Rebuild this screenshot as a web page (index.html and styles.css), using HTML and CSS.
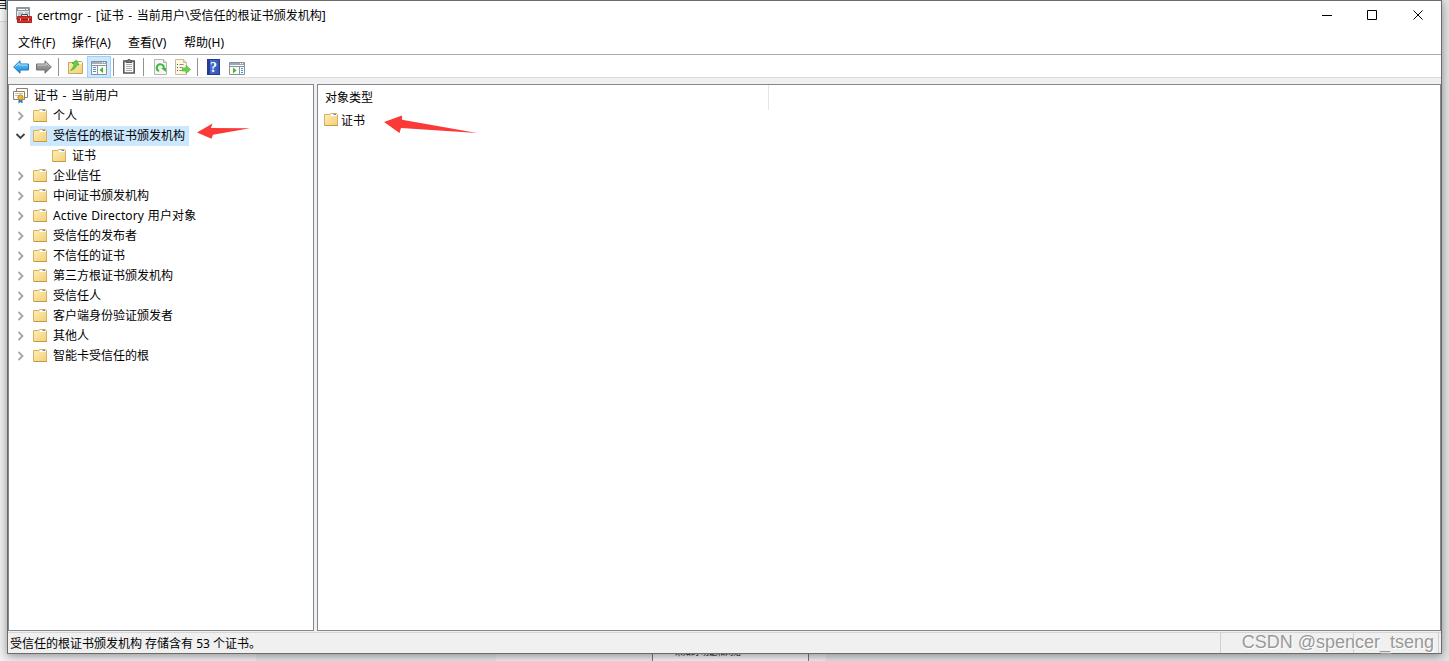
FILE: index.html
```html
<!DOCTYPE html>
<html lang="zh-CN">
<head>
<meta charset="UTF-8">
<title>certmgr</title>
<link rel="stylesheet" href="styles.css">
</head>
<body>
<svg class="defs" width="0" height="0">
<defs>
<linearGradient id="gold" x1="0" y1="0" x2="1" y2="1"><stop offset="0" stop-color="#ffefb4"/><stop offset="1" stop-color="#f2cf78"/></linearGradient>
<linearGradient id="blue" x1="0" y1="0" x2="0" y2="1"><stop offset="0" stop-color="#7fd4fb"/><stop offset="1" stop-color="#0b83dc"/></linearGradient>
<linearGradient id="gray" x1="0" y1="0" x2="0" y2="1"><stop offset="0" stop-color="#b4b4b4"/><stop offset="1" stop-color="#767676"/></linearGradient>
</defs>
<symbol id="folder" viewBox="0 0 14 13">
<path d="M.5 1.500h5l1-1h6l1 1v11H.5z" fill="url(#gold)" stroke="#d3b065"/>
<path d="M7 1h5.500v2H7z" fill="#fff"/><path d="M9.500 1h2.500v1H9.500z" fill="#3f91d8"/>
<path d="M1 12.500h13" stroke="#c39a45"/>
</symbol>
<symbol id="right" viewBox="0 0 8 10"><path d="M1.500 1l4 4-4 4" fill="none" stroke="#a6a6a6" stroke-width="1.800"/></symbol>
<symbol id="down" viewBox="0 0 10 8"><path d="M1.500 2l4 4 4-4" fill="none" stroke="#404040" stroke-width="1.800"/></symbol>
</svg>

<!-- windows lying behind -->
<div class="behind">
<div class="behind-top">自</div>
<div class="behind-box">未知的 功能和网络</div>
</div>

<div class="window">
<div class="titlebar">
<svg class="app-icon" width="16" height="17" viewBox="0 0 16 17">
<path d="M.5 .5h13v12H.5z" fill="#e3e8eb" stroke="#8a949b"/><path d="M1 1h12v3H1z" fill="#8d999f"/>
<path d="M2 2.500h7M10 2.500h2" stroke="#fff"/><path d="M2 6h5M2 8h3M9 6h4" stroke="#9ca6ac"/>
<path d="M5.500 9.500v-2h6v2" fill="none" stroke="#4a4a4a"/>
<path d="M1.500 9.500h14v6h-14z" fill="#d3302a" stroke="#b3211d"/>
<path d="M2 12.500h13" stroke="#981b18"/><path d="M4 11.500h1v2H4zM12 11.500h1v2h-1z" fill="#f3e4e2"/>
</svg>
<span class="title">certmgr - [证书 - 当前用户\受信任的根证书颁发机构]</span>
<svg class="controls" width="112" height="14" viewBox="0 0 112 14">
<path d="M2 7.500h10M47.500 2.500h9v9h-9zM93.500 2.500l9 9M102.500 2.500l-9 9" fill="none" stroke="#000"/>
</svg>
</div>
<div class="menu"><span>文件(F)</span><span>操作(A)</span><span>查看(V)</span><span>帮助(H)</span></div>
<div class="toolbar">
<svg class="back" width="16" height="14" viewBox="0 0 16 14"><path d="M.7 7L7 .8V4h8.500v6H7v3.200z" fill="url(#blue)" stroke="#2776b5"/><path d="M2.500 6.500L6 3v2h8.500" fill="none" stroke="#a7e3ff"/></svg>
<svg class="forward" width="16" height="14" viewBox="0 0 16 14"><path d="M15.300 7L9 .8V4H.5v6H9v3.200z" fill="url(#gray)" stroke="#737373"/><path d="M1.500 5H10V3l3.500 3.500" fill="none" stroke="#c9c9c9"/></svg>
<i class="sep"></i>
<svg class="up" width="15" height="15" viewBox="0 0 15 15"><path d="M.5 3.500h5l1-1h7l1 1v11H.5z" fill="url(#gold)" stroke="#c8a65c"/><path d="M9 3h5v2H9z" fill="#f8f2de"/><path d="M2.500 11.500c3-.5 5.500-2.500 6.500-5.500h2L8.500 1 4 4.500h2C6 7 5 9 2.500 11.500z" fill="#5cd343" stroke="#36a52b" stroke-width=".6"/></svg>
<span class="tool-on"><svg width="16" height="14" viewBox="0 0 16 14"><path d="M.5 .5h15v13H.5z" fill="#fbfbfb" stroke="#87919a"/><path d="M1 1h14v2H1z" fill="#a4afb9"/><path d="M11 1.500h1M13 1.500h1" stroke="#fff"/><path d="M1 4.500h14M6.500 5v9" stroke="#8795a1"/><path d="M2 6.500h3M2 8.500h3M2 10.500h3" stroke="#4c91d0"/><path d="M12 6v6L8.500 9z" fill="#3dbb2f"/></svg></span>
<i class="sep sep-on"></i>
<svg class="clip" width="12" height="15" viewBox="0 0 12 15"><path d="M.8 2h10.400v12H.8z" fill="#fafafa" stroke="#575757" stroke-width="1.600"/><path d="M3 1.500h2V.5h2v1h2v2H3z" fill="#777" stroke="#555"/><path d="M3 5.500h6M3 7.500h6M3 9.500h6M3 11.500h6" stroke="#aaa"/></svg>
<i class="sep sep-clip"></i>
<svg class="refresh" width="13" height="16" viewBox="0 0 13 16"><path d="M.5 .5h9l3 3v12H.5z" fill="#f7f7f7" stroke="#b4b4b4"/><path d="M9.500 .5v3h3" fill="#ddd" stroke="#b4b4b4"/><path d="M5 12A3.500 3.500 0 1 1 9.700 9.500" fill="none" stroke="#3dbb3a" stroke-width="2"/><path d="M7 9h5v4z" fill="#3dbb3a"/></svg>
<svg class="export" width="16" height="16" viewBox="0 0 16 16"><path d="M.5 .5h8l3 3v12H.5z" fill="#fff8df" stroke="#c4bda6"/><path d="M8.500 .5v3h3" fill="#e9dfbe" stroke="#c4bda6"/><path d="M4.500 5.500h4M4.500 8.500h3M4.500 11.500h4" stroke="#8b8b8b"/><path d="M2 5.500h1M2 8.500h1M2 11.500h1" stroke="#555"/><path d="M7.500 9H11V6.500l4.500 4-4.500 4V12H7.500z" fill="#6ad34e" stroke="#4ab53c" stroke-width=".7"/></svg>
<i class="sep sep-export"></i>
<span class="help">?</span>
<svg class="pane-icon" width="16" height="13" viewBox="0 0 16 13"><path d="M.5 .5h15v12H.5z" fill="#fbfbfb" stroke="#87919a"/><path d="M1 1h14v2H1z" fill="#9ca9b5"/><path d="M11 1.500h1M13 1.500h1" stroke="#fff"/><path d="M1 4.500h14M10.500 5v8" stroke="#8795a1"/><path d="M12 6.500h2M12 8.500h2M12 10.500h2" stroke="#4c91d0"/><path d="M4 5.500v6L7.500 8.500z" fill="#3dbb2f"/></svg>
</div>
<div class="panes">
<div class="tree">
<div class="row root"><svg width="15" height="16" viewBox="0 0 15 16"><path d="M3.500 .5h11v9h-11z" fill="#fffdf5" stroke="#8a8172"/><path d="M.500 3.500h11v8H.500z" fill="#fff" stroke="#8a8172"/><path d="M2 5.500h8M2 7.500h4" stroke="#c9c2b4"/><path d="M5.500 11v4.500l2-1.500 2 1.500V11z" fill="#1877ca"/><circle cx="7.500" cy="9.500" r="2.600" fill="#efb82b" stroke="#bb861b"/></svg><span>证书 - 当前用户</span></div>
<div class="row"><svg class="chevron"><use href="#right"/></svg><span class="node"><svg class="folder"><use href="#folder"/></svg>个人</span></div>
<div class="row"><svg class="chevron open"><use href="#down"/></svg><span class="node selected"><svg class="folder"><use href="#folder"/></svg>受信任的根证书颁发机构</span></div>
<div class="row child"><span class="node"><svg class="folder"><use href="#folder"/></svg>证书</span></div>
<div class="row"><svg class="chevron"><use href="#right"/></svg><span class="node"><svg class="folder"><use href="#folder"/></svg>企业信任</span></div>
<div class="row"><svg class="chevron"><use href="#right"/></svg><span class="node"><svg class="folder"><use href="#folder"/></svg>中间证书颁发机构</span></div>
<div class="row"><svg class="chevron"><use href="#right"/></svg><span class="node latin"><svg class="folder"><use href="#folder"/></svg>Active Directory 用户对象</span></div>
<div class="row"><svg class="chevron"><use href="#right"/></svg><span class="node"><svg class="folder"><use href="#folder"/></svg>受信任的发布者</span></div>
<div class="row"><svg class="chevron"><use href="#right"/></svg><span class="node"><svg class="folder"><use href="#folder"/></svg>不信任的证书</span></div>
<div class="row"><svg class="chevron"><use href="#right"/></svg><span class="node"><svg class="folder"><use href="#folder"/></svg>第三方根证书颁发机构</span></div>
<div class="row"><svg class="chevron"><use href="#right"/></svg><span class="node"><svg class="folder"><use href="#folder"/></svg>受信任人</span></div>
<div class="row"><svg class="chevron"><use href="#right"/></svg><span class="node"><svg class="folder"><use href="#folder"/></svg>客户端身份验证颁发者</span></div>
<div class="row"><svg class="chevron"><use href="#right"/></svg><span class="node"><svg class="folder"><use href="#folder"/></svg>其他人</span></div>
<div class="row"><svg class="chevron"><use href="#right"/></svg><span class="node"><svg class="folder"><use href="#folder"/></svg>智能卡受信任的根</span></div>
</div>
<div class="list">
<div class="list-head">对象类型</div>
<div class="list-row"><svg class="folder"><use href="#folder"/></svg>证书</div>
</div>
</div>
<div class="status"><span class="status-text">受信任的根证书颁发机构 存储含有 53 个证书。</span><span class="status-cell"></span><span class="status-cell last"></span></div>
</div>

<!-- red marks and watermark over the window -->
<svg class="marks" width="290" height="30" viewBox="0 0 290 30">
<path d="M0 19.500l15.500-9-1.500 4.500 39 .2-37 6.500-1.500 4z" fill="#fb3a37"/>
<path d="M187 9l18-6.500v4.300L280 20l-76-5-1.500 5z" fill="#fb3a37"/>
</svg>
<div class="watermark">CSDN @spencer_tseng</div>
</body>
</html>
```
FILE: styles.css
```css
body {
margin: 0;
width: 1449px;
height: 661px;
position: relative;
overflow: hidden;
background: #e9e9e9;
font-family: "Noto Sans", "Noto Sans CJK SC", sans-serif;
font-size: 12px;
color: #000;
}
svg {
display: block;
flex: none;
}
.defs {
position: absolute;
}
.behind {
position: absolute;
inset: 0;
background: linear-gradient(90deg, #f1f1f1 256px, #e6e7e8 256px, #e6e7e8 496px, #eee 496px, #eee 826px, #e2e4e4 826px);
}
.behind-top {
width: 15px;
height: 21px;
text-indent: -4px;
line-height: 10px;
white-space: nowrap;
border-bottom: 1px solid #ddd;
background: #fafafa;
}
.behind-box {
position: absolute;
left: 652px;
top: 630px;
width: 133px;
height: 31px;
padding-left: 22px;
line-height: 43px;
font-size: 8px;
background: #f6f6f6;
border: solid #777;
border-width: 0 1px;
}
.window {
position: relative;
display: flex;
flex-direction: column;
box-sizing: border-box;
width: 1435px;
height: 654px;
margin-left: 7px;
background: #f0f0f0;
border: 1px solid #6b6b6b;
box-shadow: 0 2px 9px rgba(0, 0, 0, .4);
}
.titlebar {
display: flex;
align-items: center;
height: 28px;
padding: 0 9px 1px 8px;
background: #fff;
}
.title {
margin-left: 5px;
letter-spacing: .04px;
word-spacing: 1.4px;
}
.controls {
margin-left: auto;
}
.menu {
display: flex;
height: 24px;
line-height: 26px;
padding-left: 10px;
background: #fff;
border-bottom: 1px solid #acacac;
}
.menu span {
width: 56px;
}
.menu span:first-child {
width: 54px;
}
.toolbar {
display: flex;
align-items: center;
padding: 1px 5px 0;
height: 21px;
background: #fff;
border-bottom: 1px solid #dadada;
}
.forward {
margin-left: 7px;
}
.sep {
width: 1px;
height: 18px;
margin-left: 6px;
background: #929292;
}
.up {
margin-left: 9px;
}
.tool-on {
width: 22px;
height: 20px;
margin-left: 4px;
display: flex;
align-items: center;
justify-content: center;
background: #cce8ff;
border: 1px solid #99d1ff;
}
.tool-on svg {
margin-top: 2px;
}
.sep-on {
margin-left: 2px;
}
.clip {
margin-left: 9px;
}
.sep-clip {
margin-left: 8px;
}
.refresh {
margin-left: 10px;
}
.export {
margin-left: 8px;
}
.sep-export {
margin-left: 6px;
}
.help {
width: 11px;
height: 14px;
margin-left: 9px;
border: 1px solid #273b8c;
background: linear-gradient(90deg, #243f9c 2px, #4c6fd8 2px, #3455b9);
color: #fff;
font: bold 14px/15px "Liberation Serif", serif;
text-align: center;
}
.pane-icon {
margin: 3px 0 0 9px;
}
.panes {
display: flex;
gap: 3px;
height: 547px;
margin-top: 6px;
}
.tree, .list {
box-sizing: border-box;
background: #fff;
border: 1px solid #828790;
}
.tree {
width: 306px;
padding-top: 1px;
}
.row {
display: flex;
align-items: center;
height: 20px;
line-height: 20px;
white-space: nowrap;
}
.root {
padding-left: 4px;
}
.root span {
margin: 0 0 1px 6px;
word-spacing: 1.5px;
}
.chevron {
width: 8px;
height: 10px;
margin: 0 5px 0 8px;
}
.chevron.open {
width: 10px;
height: 8px;
margin: 0 5px 1px 6px;
}
.node {
display: flex;
align-items: center;
box-sizing: border-box;
height: 20px;
padding: 0 4px 1px 3px;
}
.child .node {
margin-left: 40px;
}
.selected {
background: #cce8ff;
}
.latin {
letter-spacing: .12px;
word-spacing: .5px;
}
.folder {
width: 14px;
height: 13px;
margin-right: 6px;
}
.list {
flex: 1;
}
.list-head {
width: 443px;
height: 25px;
padding-left: 7px;
line-height: 25px;
border-right: 1px solid #e5e5e5;
}
.list-row {
display: flex;
align-items: center;
height: 20px;
padding-left: 6px;
}
.list-row .folder {
margin: 0 3px 2px 0;
}
.status {
display: flex;
height: 20px;
margin-top: 1px;
line-height: 21px;
border-top: 1px solid #d7d7d7;
}
.status-text {
flex: 1;
padding-left: 2px;
}
.status-cell {
width: 132px;
border-left: 1px solid #d0d0d0;
}
.status-cell.last {
width: 84px;
border-right: 1px solid #d0d0d0;
margin-right: 2px;
}
.marks {
position: absolute;
left: 197px;
top: 113px;
}
.watermark {
position: absolute;
right: 15px;
top: 630px;
font: 18px/24px "Liberation Sans", sans-serif;
color: #999;
text-shadow: 1px 1px #fff;
}
```
